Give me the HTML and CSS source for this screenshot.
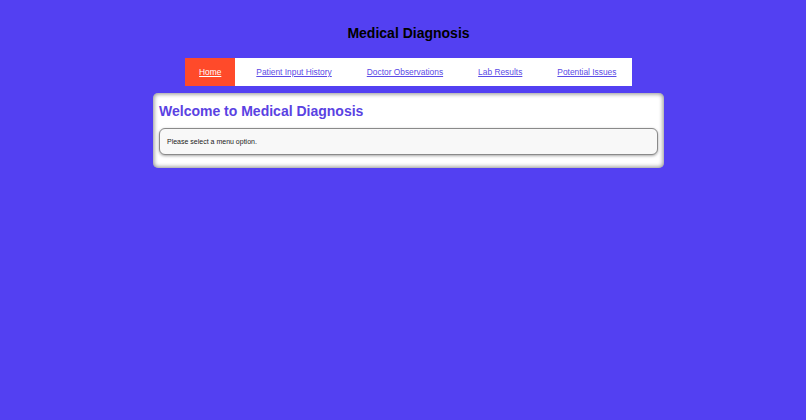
FILE: index.html
```html
<!DOCTYPE html>
<html>
<head>
<meta charset="utf-8">
<title>Medical Diagnosis</title>
<link rel="stylesheet" href="styles.css">
</head>
<body>
<header class="site-header">
  <h1 class="site-title">Medical Diagnosis</h1>
</header>
<nav class="menu">
  <a class="menu-link active" href="#">Home</a>
  <a class="menu-link" href="#">Patient Input History</a>
  <a class="menu-link" href="#">Doctor Observations</a>
  <a class="menu-link" href="#">Lab Results</a>
  <a class="menu-link" href="#">Potential Issues</a>
</nav>
<main class="panel">
  <h2 class="panel-title">Welcome to Medical Diagnosis</h2>
  <div class="message">Please select a menu option.</div>
</main>
</body>
</html>
```
FILE: styles.css
```css
html, body {
  margin: 0;
  padding: 0;
}
body {
  background: #5340f2;
  font-family: "Liberation Sans", Arial, sans-serif;
  min-height: 420px;
  padding-left: 11px;
}
.site-header {
  padding-top: 24px;
  height: 34px;
}
.site-title {
  margin: 0;
  text-align: center;
  font-size: 14px;
  line-height: 18px;
  font-weight: bold;
  color: #000;
}
.menu {
  width: 447px;
  height: 28px;
  margin: 0 auto;
  background: #fff;
  display: flex;
  gap: 7px;
  box-sizing: border-box;
}
.menu-link {
  display: flex;
  align-items: center;
  padding: 0 14px;
  font-size: 8.4px;
  color: #5b4ae6;
  text-decoration: underline;
}
.menu-link.active {
  background: #ff4a2a;
  color: #fff;
}
.panel {
  width: 511px;
  margin: 7px auto 0;
  box-sizing: border-box;
  background: #fff;
  border-radius: 5px;
  box-shadow: inset 0 0 4px 1px rgba(0,0,0,0.45);
  padding: 9px 6px 13px;
}
.panel-title {
  margin: 0 0 8px;
  font-size: 14px;
  line-height: 18px;
  font-weight: bold;
  color: #5a42e2;
}
.message {
  background: #f8f8f8;
  border: 1.5px solid #8a8a8a;
  border-radius: 6px;
  box-shadow: 0 1px 3px rgba(0,0,0,0.35);
  padding: 0 7px;
  height: 27px;
  box-sizing: border-box;
  display: flex;
  align-items: center;
  font-size: 7px;
  color: #222;
}
```
